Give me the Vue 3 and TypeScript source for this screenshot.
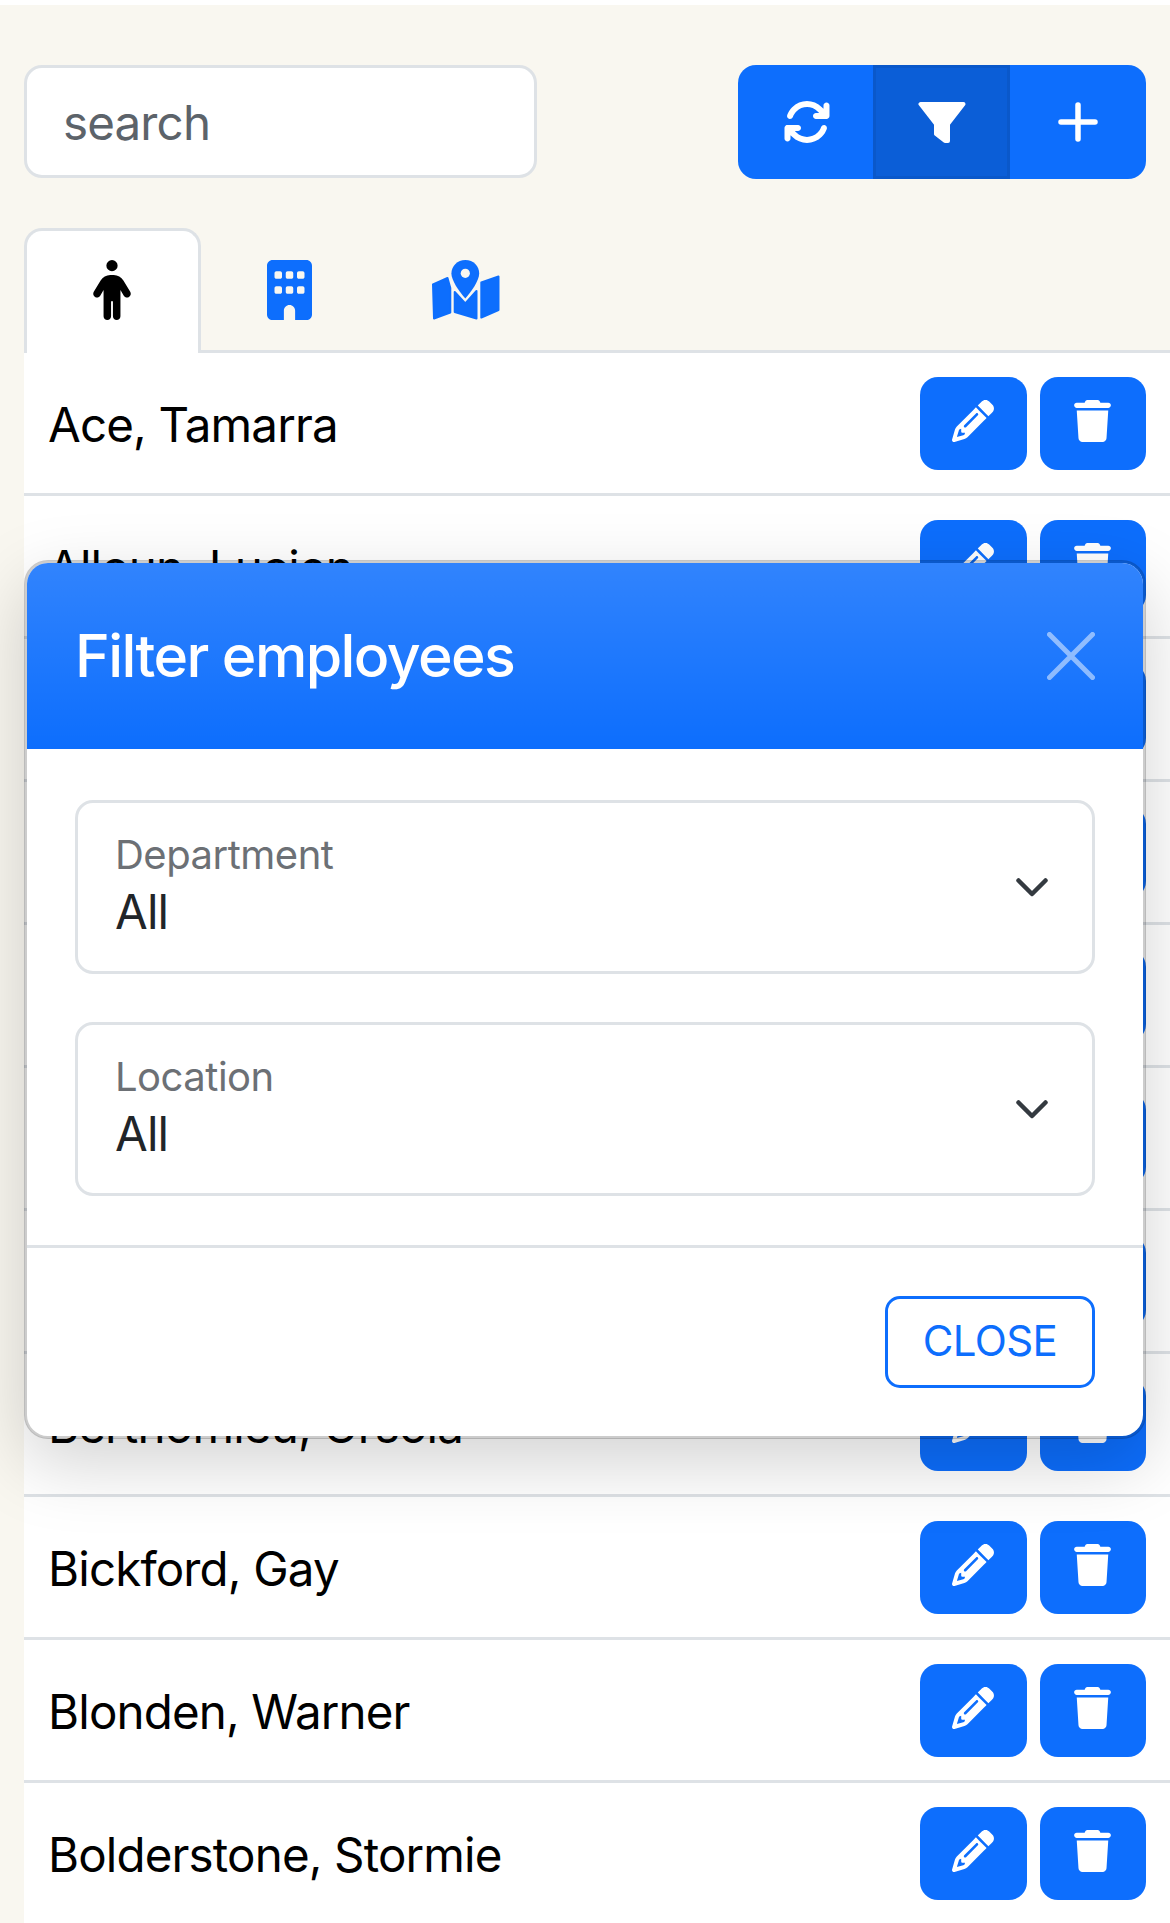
<script setup lang="ts">
const employees: string[] = [
  "Ace, Tamarra",
  "Alloun, Lucien",
  "",
  "",
  "",
  "",
  "",
  "Berthomieu, Ursola",
  "Bickford, Gay",
  "Blonden, Warner",
  "Bolderstone, Stormie",
];

const filters = ["Department", "Location"];

const pencil =
  "M410.3 231l11.3-11.3-33.9-33.9-62.1-62.1L291.7 89.8l-11.3 11.3-22.6 22.6L58.6 322.9c-10.4 10.4-18 23.3-22.2 37.4L1 480.7c-2.5 8.4-.2 17.5 6.1 23.7s15.3 8.5 23.7 6.1l120.3-35.4c14.1-4.2 27-11.8 37.4-22.2L387.7 253.7 410.3 231zM160 399.4l-9.1 22.7c-4 3.1-8.5 5.4-13.3 6.9L59.4 452l23-78.1c1.4-4.9 3.8-9.4 6.9-13.3l22.7-9.1v32c0 8.8 7.2 16 16 16h32zM362.7 18.7L348.3 33.2 325.7 55.8 314.3 67.1l33.9 33.9 62.1 62.1 33.9 33.9 11.3-11.3 22.6-22.6 14.5-14.5c25-25 25-65.5 0-90.5L453.3 18.7c-25-25-65.5-25-90.5 0zm-47.4 168l-144 144c-6.2 6.2-16.4 6.2-22.6 0s-6.2-16.4 0-22.6l144-144c6.2-6.2 16.4-6.2 22.6 0s6.2 16.4 0 22.6z";
const trash =
  "M135.2 17.7L128 32H32C14.3 32 0 46.3 0 64S14.3 96 32 96H416c17.7 0 32-14.3 32-32s-14.3-32-32-32H320l-7.2-14.3C307.4 6.8 296.3 0 284.2 0H163.8c-12.1 0-23.2 6.8-28.6 17.7zM416 128H32L53.2 467c1.6 25.3 22.6 45 47.9 45H346.9c25.3 0 46.3-19.7 47.9-45L416 128z";
</script>

<template>
  <div class="page">
    <div class="toolbar">
      <div class="search">search</div>
      <div class="btn-group">
        <button class="tool sync">
          <svg width="48" height="48" viewBox="0 0 512 512" fill="#fff">
            <path d="M105.1 202.6c7.7-21.8 20.2-42.3 37.8-59.8c62.5-62.5 163.8-62.5 226.3 0L386.3 160H352c-17.7 0-32 14.3-32 32s14.3 32 32 32H463.5c0 0 0 0 0 0h.4c17.7 0 32-14.3 32-32V80c0-17.7-14.3-32-32-32s-32 14.3-32 32v35.2L414.4 97.6c-87.5-87.5-229.3-87.5-316.8 0C73.2 122 55.6 150.7 44.8 181.4c-5.9 16.7 2.9 34.9 19.5 40.8s34.9-2.9 40.8-19.5zM39 289.3c-5 1.5-9.8 4.2-13.7 8.2c-4 4-6.7 8.8-8.1 14c-.3 1.2-.6 2.5-.8 3.8c-.3 1.7-.4 3.4-.4 5.1V432c0 17.7 14.3 32 32 32s32-14.3 32-32V396.9l17.6 17.5 0 0c87.5 87.4 229.3 87.4 316.7 0c24.4-24.4 42.1-53.1 52.9-83.7c5.9-16.7-2.9-34.9-19.5-40.8s-34.9 2.9-40.8 19.5c-7.7 21.8-20.2 42.3-37.8 59.8c-62.5 62.5-163.8 62.5-226.3 0l-.1-.1L125.6 352H160c17.7 0 32-14.3 32-32s-14.3-32-32-32H48.4c-1.6 0-3.2 .1-4.8 .3s-3.1 .5-4.6 1z" />
          </svg>
        </button>
        <button class="tool active">
          <svg width="48" height="42" viewBox="0 0 48 42" fill="#fff" stroke="#fff" stroke-width="4" stroke-linejoin="round">
            <path d="M2.5 3 L45.5 3 L30 23 L30 40 L27 40 L18 33 L18 23 Z" />
          </svg>
        </button>
        <button class="tool plus">
          <svg width="40" height="40" viewBox="0 0 40 40" stroke="#fff" stroke-width="5.5" stroke-linecap="round">
            <path d="M20 3V37M3 20H37" />
          </svg>
        </button>
      </div>
    </div>

    <div class="tabs">
      <div class="tab current">
        <svg width="38" height="60" viewBox="0 0 320 512" fill="#000">
          <path d="M112 48a48 48 0 1 1 96 0 48 48 0 1 1 -96 0zm40 304V480c0 17.7-14.3 32-32 32s-32-14.3-32-32V256.9L59.4 304.5c-9.1 15.1-28.8 20-43.9 10.9s-20-28.8-10.9-43.9l58.3-97c17.4-28.9 48.6-46.6 82.3-46.6h29.7c33.7 0 64.9 17.7 82.3 46.6l58.3 97c9.1 15.1 4.2 34.8-10.9 43.9s-34.8 4.2-43.9-10.9L232 256.9V480c0 17.7-14.3 32-32 32s-32-14.3-32-32V352H152z" />
        </svg>
      </div>
      <div class="tab">
        <svg width="45" height="60" viewBox="0 0 384 512" fill="#0d6efd">
          <path d="M48 0C21.5 0 0 21.5 0 48V464c0 26.5 21.5 48 48 48h96V432c0-26.5 21.5-48 48-48s48 21.5 48 48v80h96c26.5 0 48-21.5 48-48V48c0-26.5-21.5-48-48-48H48zM64 240c0-8.8 7.2-16 16-16h32c8.8 0 16 7.2 16 16v32c0 8.8-7.2 16-16 16H80c-8.8 0-16-7.2-16-16V240zm112-16h32c8.8 0 16 7.2 16 16v32c0 8.8-7.2 16-16 16H176c-8.8 0-16-7.2-16-16V240c0-8.8 7.2-16 16-16zm80 16c0-8.8 7.2-16 16-16h32c8.8 0 16 7.2 16 16v32c0 8.8-7.2 16-16 16H272c-8.8 0-16-7.2-16-16V240zM80 96h32c8.8 0 16 7.2 16 16v32c0 8.8-7.2 16-16 16H80c-8.8 0-16-7.2-16-16V112c0-8.8 7.2-16 16-16zm80 16c0-8.8 7.2-16 16-16h32c8.8 0 16 7.2 16 16v32c0 8.8-7.2 16-16 16H176c-8.8 0-16-7.2-16-16V112zM272 96h32c8.8 0 16 7.2 16 16v32c0 8.8-7.2 16-16 16H272c-8.8 0-16-7.2-16-16V112c0-8.8 7.2-16 16-16z" />
        </svg>
      </div>
      <div class="tab map">
        <svg width="68" height="60" viewBox="0 0 68 60" fill="#0d6efd" stroke="#0d6efd" stroke-width="2" stroke-linejoin="round">
          <path d="M1 24.5 L15.5 18 L18.3 28 L18.3 52.5 L2 58.5 Z" />
          <path d="M22.7 32 L33.3 43.5 L44.5 31 L44.5 58.5 L22.7 52 Z" />
          <path d="M49.3 22.5 L66.5 16.5 L66.5 50 L49.3 57.5 Z" />
          <path d="M33.3 0 C41.5 0 47.2 6 47.2 13.5 C47.2 20 40 31 33.3 38.5 C26.6 31 19.4 20 19.4 13.5 C19.4 6 25.5 0 33.3 0 Z" stroke-width="0" />
          <circle cx="33.3" cy="13.3" r="4.6" fill="#f9f7f0" stroke="none" />
        </svg>
      </div>
    </div>

    <div class="list">
      <div v-for="(name, i) in employees" :key="i" class="row">
        <span class="name">{{ name }}</span>
        <button class="row-btn edit">
          <svg width="42" height="42" viewBox="0 0 512 512" fill="#fff"><path :d="pencil" /></svg>
        </button>
        <button class="row-btn del">
          <svg width="37" height="42" viewBox="0 0 448 512" fill="#fff"><path :d="trash" /></svg>
        </button>
      </div>
    </div>

    <!-- filter modal sits over the list -->
    <div class="modal">
      <div class="modal-header">
        <span class="modal-title">Filter employees</span>
        <svg width="48" height="48" viewBox="0 0 48 48" stroke="#fff" stroke-opacity="0.5" stroke-width="5" stroke-linecap="round">
          <path d="M2.5 2.5L45.5 45.5M45.5 2.5L2.5 45.5" />
        </svg>
      </div>
      <div class="modal-body">
        <div v-for="f in filters" :key="f" class="select">
          <div class="select-text">
            <div class="select-label">{{ f }}</div>
            <div class="select-value">All</div>
          </div>
          <svg width="32" height="19" viewBox="0 0 32 19" fill="none" stroke="#343a40" stroke-width="4.5" stroke-linecap="round" stroke-linejoin="round">
            <path d="M2.5 2.5L16 16L29.5 2.5" />
          </svg>
        </div>
      </div>
      <div class="modal-footer">
        <button class="close-btn">CLOSE</button>
      </div>
    </div>
  </div>
</template>

<style scoped>
.page {
  position: relative;
  height: 1918px;
  margin-top: 5px;
  overflow: hidden;
  background: #f9f7f0;
  font-family: Inter, "Liberation Sans", sans-serif;
  font-size: 47.5px;
  letter-spacing: -0.85px;
  color: #000;
}

.toolbar {
  display: flex;
  justify-content: space-between;
  padding: 60px 24px 0;
  height: 223px;
  box-sizing: border-box;
}

.search {
  width: 513px;
  height: 113px;
  box-sizing: border-box;
  padding-left: 36px;
  line-height: 110px;
  color: #5c636a;
  background: #fff;
  border: 3px solid #dee2e6;
  border-radius: 18px;
}

.btn-group {
  display: flex;
  width: 408px;
  height: 114px;
  border-radius: 18px;
  overflow: hidden;
}

button {
  margin: 0;
  padding: 0;
  border: none;
  font: inherit;
  display: flex;
  align-items: center;
  justify-content: center;
}

.tool {
  background: #0d6efd;
}

.tool.sync {
  width: 135px;
  padding-left: 3px;
}

.tool.plus {
  width: 136px;
  padding-right: 1px;
}

.tool.active {
  width: 137px;
  background: #0b5ed7;
  border: 3px solid #0a58ca;
}

.tabs {
  display: flex;
  height: 125px;
  margin-left: 24px;
  border-bottom: 3px solid #dee2e6;
  box-sizing: border-box;
}

.tab {
  width: 177px;
  height: 125px;
  box-sizing: border-box;
  padding-top: 32px;
  display: flex;
  justify-content: center;
  align-items: flex-start;
}

.tab.map {
  padding-right: 2px;
}

.tab.current {
  background: #fff;
  border: 3px solid #dee2e6;
  border-bottom: none;
  border-radius: 18px 18px 0 0;
  padding-top: 29px;
  padding-right: 2px;
}

.list {
  margin-left: 24px;
  background: #fff;
}

.row {
  display: flex;
  align-items: center;
  height: 143px;
  box-sizing: border-box;
  padding: 24px 24px 23px;
  border-bottom: 3px solid #dee2e6;
}

.name {
  flex: 1;
  padding-top: 1px;
  white-space: nowrap;
}

.row-btn {
  height: 93px;
  padding-bottom: 5px;
  padding-right: 2px;
  background: #0d6efd;
  border-radius: 18px;
}

.edit {
  width: 107px;
  margin-right: 13px;
}

.del {
  width: 106px;
}

.modal {
  position: absolute;
  top: 555px;
  left: 24px;
  width: 1122px;
  box-sizing: border-box;
  background: #fff;
  background-clip: padding-box;
  border: 3px solid rgba(0, 0, 0, 0.2);
  border-radius: 24px;
  box-shadow: 0 24px 72px rgba(0, 0, 0, 0.175);
}

.modal-header {
  display: flex;
  align-items: center;
  justify-content: space-between;
  height: 186px;
  box-sizing: border-box;
  padding: 0 48px;
  color: #fff;
  background: #0d6efd linear-gradient(180deg, rgba(255, 255, 255, 0.15), rgba(255, 255, 255, 0));
  border-radius: 21px 21px 0 0;
}

.modal-title {
  padding-bottom: 2px;
  font-size: 59px;
  font-weight: 500;
  letter-spacing: -1.6px;
}

.modal-body {
  display: flex;
  flex-direction: column;
  gap: 48px;
  padding: 51px 48px 49px;
  border-bottom: 3px solid #dee2e6;
}

.select {
  display: flex;
  align-items: center;
  justify-content: space-between;
  height: 174px;
  box-sizing: border-box;
  padding: 0 44px 0 37px;
  border: 3px solid #dee2e6;
  border-radius: 18px;
}

.select-text {
  margin-top: -11px;
}

.select-label {
  font-size: 40px;
  line-height: 60px;
  letter-spacing: -0.5px;
  color: #6c7075;
}

.select-value {
  line-height: 54px;
  color: #212529;
}

.modal-footer {
  display: flex;
  justify-content: flex-end;
  padding: 48px;
}

.close-btn {
  width: 210px;
  height: 92px;
  box-sizing: border-box;
  padding-bottom: 4px;
  background: #fff;
  color: #0d6efd;
  border: 3px solid #0d6efd;
  border-radius: 15px;
  font-size: 42px;
  letter-spacing: -0.6px;
}
</style>

<style>
html,
body {
  background: #fff;
}
</style>
